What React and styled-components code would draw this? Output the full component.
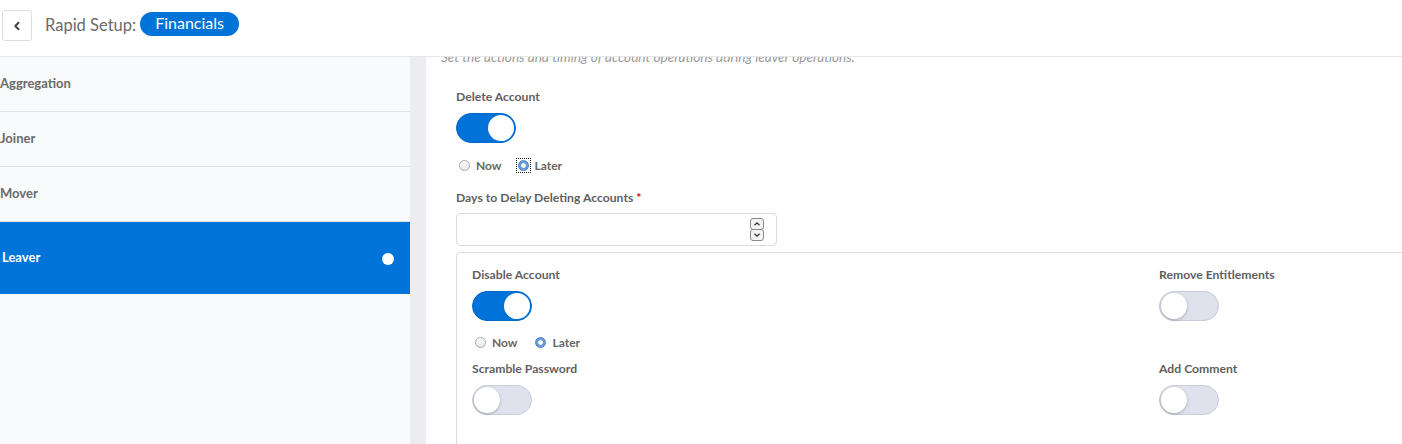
import React from 'react';
import styled, { createGlobalStyle } from 'styled-components';

const GlobalStyle = createGlobalStyle`
  html, body {
    margin: 0;
    padding: 0;
    height: 444px;
    overflow: hidden;
    background: #fff;
    font-family: Lato, "Open Sans", "Liberation Sans", sans-serif;
  }
  * { box-sizing: border-box; }
`;

const navItems = [
  { label: 'Aggregation' },
  { label: 'Joiner' },
  { label: 'Mover' },
  { label: 'Leaver', active: true },
];

const App = () => (
  <Page>
    <GlobalStyle />
    <Header>
      <BackButton aria-label="Back">
        <svg width="10" height="10" viewBox="0 0 10 10">
          <path d="M6.5 1.8 L3.3 5 L6.5 8.2" fill="none" stroke="#444" strokeWidth="2" strokeLinecap="round" strokeLinejoin="round" />
        </svg>
      </BackButton>
      <Title>Rapid Setup:</Title>
      <Pill>Financials</Pill>
    </Header>

    <Body>
      <Sidebar>
        {navItems.map(item => (
          <NavItem key={item.label} active={item.active}>
            {item.label}
            {item.active && <NavDot />}
          </NavItem>
        ))}
      </Sidebar>
      <ScrollTrack />

      <Main>
        <Description>
          Set the actions and timing of account operations during leaver operations.
        </Description>

        <Form>
          <Label>Delete Account</Label>
          <Toggle on />
          <RadioRow top="14px">
            <RadioOption><Radio /><span>Now</span></RadioOption>
            <RadioOption><Focus><Radio checked /></Focus><span>Later</span></RadioOption>
          </RadioRow>

          <Label top="17px">
            Days to Delay Deleting Accounts <Required>*</Required>
          </Label>
          <InputBox>
            <Spinner>
              <SpinButton>
                <svg width="8" height="6" viewBox="0 0 8 6"><path d="M1.5 4.2 L4 1.8 L6.5 4.2" fill="none" stroke="#333" strokeWidth="1.2" /></svg>
              </SpinButton>
              <SpinButton>
                <svg width="8" height="6" viewBox="0 0 8 6"><path d="M1.5 1.8 L4 4.2 L6.5 1.8" fill="none" stroke="#333" strokeWidth="1.2" /></svg>
              </SpinButton>
            </Spinner>
          </InputBox>

          <OptionsBox>
            <OptionCell>
              <Label>Disable Account</Label>
              <Toggle on />
              <RadioRow top="13px">
                <RadioOption><Radio /><span>Now</span></RadioOption>
                <RadioOption><Radio checked /><span>Later</span></RadioOption>
              </RadioRow>
            </OptionCell>
            <OptionCell>
              <Label>Remove Entitlements</Label>
              <Toggle />
            </OptionCell>
            <OptionCell>
              <Label>Scramble Password</Label>
              <Toggle />
            </OptionCell>
            <OptionCell>
              <Label>Add Comment</Label>
              <Toggle />
            </OptionCell>
          </OptionsBox>
        </Form>
      </Main>
    </Body>
  </Page>
);

export default App;

const Page = styled.div`
  width: 1402px;
  height: 444px;
  overflow: hidden;
  display: flex;
  flex-direction: column;
`;

const Header = styled.header`
  height: 57px;
  flex-shrink: 0;
  display: flex;
  align-items: flex-start;
  padding: 10px 0 0 2px;
  border-bottom: 1px solid #e4e6ea;
  background: #fff;
  position: relative;
  z-index: 2;
`;

const BackButton = styled.button`
  width: 30px;
  height: 31px;
  padding: 0;
  display: flex;
  align-items: center;
  justify-content: center;
  background: #fff;
  border: 1px solid #dcdde0;
  border-radius: 3px;
`;

const Title = styled.span`
  margin: 5px 0 0 13px;
  font-size: 16.5px;
  line-height: 20px;
  color: #6b6b6b;
`;

const Pill = styled.span`
  margin: 2px 0 0 4px;
  height: 24px;
  padding: 0 15px 3px;
  display: flex;
  align-items: center;
  border-radius: 12px;
  background: #0073d9;
  color: #fff;
  font-size: 16px;
`;

const Body = styled.div`
  flex: 1;
  display: flex;
  min-height: 0;
`;

const Sidebar = styled.nav`
  width: 410px;
  flex-shrink: 0;
  background: #f9fafb;
`;

const NavItem = styled.div`
  height: ${props => (props.active ? '72px' : '55px')};
  display: flex;
  align-items: center;
  justify-content: space-between;
  padding: ${props => (props.active ? '0 16px 2px 2px' : '0 0 2px 0')};
  border-bottom: ${props => (props.active ? 'none' : '1px solid #e2e3e6')};
  background: ${props => (props.active ? '#0074d9' : 'transparent')};
  color: ${props => (props.active ? '#fff' : '#6a6a6a')};
  font-size: 13px;
  font-weight: 700;
`;

const NavDot = styled.span`
  width: 12px;
  height: 12px;
  border-radius: 50%;
  background: #fff;
  margin-top: 3px;
`;

const ScrollTrack = styled.div`
  width: 16px;
  flex-shrink: 0;
  background: #ecedf1;
`;

const Main = styled.main`
  flex: 1;
  overflow: hidden;
  background: #fff;
`;

const Description = styled.p`
  margin: -8px 0 0 15px;
  font-size: 13.6px;
  line-height: 16px;
  font-style: italic;
  color: #9a9a9a;
  white-space: nowrap;
`;

const Form = styled.div`
  padding: 24px 0 0 30px;
`;

const Label = styled.div`
  margin-top: ${props => props.top || '0'};
  margin-bottom: 8px;
  font-size: 12.2px;
  line-height: 16px;
  font-weight: 700;
  color: #5f5f5f;
  white-space: nowrap;
`;

const Required = styled.span`
  color: #d0021b;
`;

const Toggle = styled.div`
  position: relative;
  width: 60px;
  height: 30px;
  border-radius: 15px;
  background: ${props => (props.on ? '#0072d8' : '#dfe1ec')};
  border: 1px solid ${props => (props.on ? '#0068c8' : '#c9ccd9')};

  &::after {
    content: '';
    position: absolute;
    top: 1px;
    left: ${props => (props.on ? '31px' : '1px')};
    width: 26px;
    height: 26px;
    border-radius: 50%;
    background: #fff;
    box-shadow: ${props => (props.on ? 'none' : '0 1px 3px rgba(0,0,0,0.25)')};
  }
`;

const RadioRow = styled.div`
  margin-top: ${props => props.top || '0'};
  display: flex;
  gap: 18px;
  padding-left: 3px;
  height: 16px;
  align-items: center;
`;

const RadioOption = styled.label`
  display: flex;
  align-items: center;
  gap: 6px;
  font-size: 12px;
  font-weight: 700;
  color: #666;
`;

const Focus = styled.span`
  display: flex;
  margin: 0 -3px;
  padding: 2px;
  outline: 1px dotted #222;
  outline-offset: -1px;
`;

const Radio = styled.span`
  width: 11px;
  height: 11px;
  border-radius: 50%;
  border: 1px solid ${props => (props.checked ? '#4b7fc2' : '#a8a8a8')};
  background: ${props => (props.checked
    ? 'radial-gradient(circle, #fff 0 2px, #6a9ddb 2.5px)'
    : 'linear-gradient(#fdfdfd, #e9e9e9)')};
`;

const InputBox = styled.div`
  width: 321px;
  height: 33px;
  margin-top: -1px;
  border: 1px solid #d9dbe0;
  border-radius: 4px;
  display: flex;
  align-items: center;
  justify-content: flex-end;
  padding-right: 12px;
`;

const Spinner = styled.div`
  display: flex;
  flex-direction: column;
`;

const SpinButton = styled.span`
  width: 14px;
  height: 12px;
  display: flex;
  align-items: center;
  justify-content: center;
  border: 1px solid #8a8a8a;
  border-radius: 3px;
  background: #f3f3f3;
  margin-top: -1px;
`;

const OptionsBox = styled.div`
  margin-top: 6px;
  width: 1000px;
  height: 220px;
  border: 1px solid #d9dbe0;
  border-radius: 4px;
  padding: 14px 0 0 15px;
  display: grid;
  grid-template-columns: 687px 1fr;
  row-gap: 11px;
  align-content: start;
`;

const OptionCell = styled.div`
  display: flex;
  flex-direction: column;
  align-items: flex-start;
`;
